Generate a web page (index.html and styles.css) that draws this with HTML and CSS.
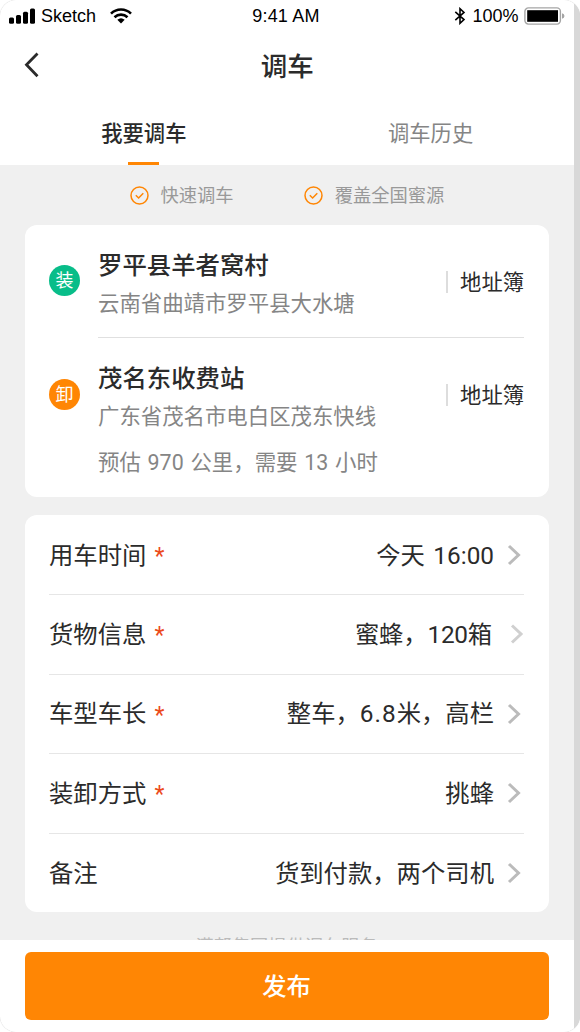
FILE: index.html
```html
<!DOCTYPE html>
<html lang="zh-CN">
<head>
<meta charset="utf-8">
<title>调车</title>
<link rel="stylesheet" href="styles.css">
</head>
<body>
<div class="frame">
<main class="screen">
  <div class="status">
    <div class="status-left">
      <svg class="signal" width="27" height="16" viewBox="0 0 27 16"><rect x="0" y="9.5" width="5" height="6.2" rx="1.5"/><rect x="7" y="7" width="5" height="8.7" rx="1.5"/><rect x="14" y="3.7" width="5" height="12" rx="1.5"/><rect x="21" y="0.5" width="5" height="15.2" rx="1.5"/></svg>
      <span>Sketch</span>
      <svg class="wifi" width="22" height="16" viewBox="0 0 22 16"><g fill="none" stroke="#000" stroke-width="2.6"><path d="M1 5.6C6.5 .1 15.500 .1 21 5.600"/><path d="M4.500 9.200C8.200 5.700 13.800 5.700 17.500 9.200"/></g><path d="M7.300 11.700Q11 8.700 14.700 11.700L11 15.500z"/></svg>
    </div>
    <div class="clock">9:41 AM</div>
    <div class="status-right">
      <svg class="bluetooth" width="12" height="18" viewBox="0 0 12 18"><path d="M1.300 4.800L10 12.600L6 16.300V1.700L10 5.400L1.300 13.200" fill="none" stroke="#000" stroke-width="1.600"/></svg>
      <span>100%</span>
      <svg class="battery" width="41" height="18" viewBox="0 0 41 18"><rect x=".9" y=".9" width="35.500" height="16.200" rx="3.500" fill="#fff" stroke="#a5a5a5" stroke-width="1.400"/><rect x="3.200" y="3.200" width="30.800" height="11.600"/><path d="M38 6.200Q40.500 7 40.500 9T38 11.800z" fill="#a5a5a5"/></svg>
    </div>
  </div>
  <header class="header">
    <svg class="back" width="16" height="26" viewBox="0 0 16 26"><path d="M13.500 1.500L2.500 12.800L13.500 24.200" fill="none" stroke="#2b2b2b" stroke-width="2.800"/></svg>
    <h1 class="title">调车</h1>
  </header>
  <nav class="tabs">
    <div class="tab active">我要调车</div>
    <div class="tab">调车历史</div>
  </nav>
  <section class="content">
    <div class="features">
      <div class="feature"><svg width="19" height="19" viewBox="0 0 19 19"><g fill="none" stroke="#ff8604" stroke-width="1.500"><circle cx="9.500" cy="9.500" r="8.500"/><path d="M5.800 9.300L8.600 12L13.300 7.200"/></g></svg><span>快速调车</span></div>
      <div class="feature"><svg width="19" height="19" viewBox="0 0 19 19"><g fill="none" stroke="#ff8604" stroke-width="1.500"><circle cx="9.500" cy="9.500" r="8.500"/><path d="M5.800 9.300L8.600 12L13.300 7.200"/></g></svg><span>覆盖全国蜜源</span></div>
    </div>
    <div class="card route">
      <div class="stop">
        <span class="badge load">装</span>
        <div class="place"><h2 class="name">罗平县羊者窝村</h2><p class="address">云南省曲靖市罗平县大水塘</p></div>
        <span class="book">地址簿</span>
      </div>
      <div class="stop second">
        <span class="badge unload">卸</span>
        <div class="place"><h2 class="name">茂名东收费站</h2><p class="address">广东省茂名市电白区茂东快线</p></div>
        <span class="book">地址簿</span>
      </div>
      <p class="estimate">预估 970 公里，需要 13 小时</p>
    </div>
    <div class="card form">
      <div class="row"><span class="label">用车时间</span><span class="required">*</span><span class="value time">今天 16:00</span><svg class="arrow" width="14" height="22" viewBox="0 0 14 22"><path d="M2 2L11.500 11L2 20"/></svg></div>
      <div class="row light"><span class="label">货物信息</span><span class="required">*</span><span class="value cargo">蜜蜂，120箱</span><svg class="arrow" width="14" height="22" viewBox="0 0 14 22"><path d="M2 2.500L11 11L2 19.500"/></svg></div>
      <div class="row"><span class="label">车型车长</span><span class="required">*</span><span class="value vehicle">整车，<span class="length">6.8</span>米，高栏</span><svg class="arrow" width="14" height="22" viewBox="0 0 14 22"><path d="M2 2L11.500 11L2 20"/></svg></div>
      <div class="row"><span class="label">装卸方式</span><span class="required">*</span><span class="value">挑蜂</span><svg class="arrow" width="14" height="22" viewBox="0 0 14 22"><path d="M2 2L11.500 11L2 20"/></svg></div>
      <div class="row"><span class="label">备注</span><span class="value">货到付款，两个司机</span><svg class="arrow" width="14" height="22" viewBox="0 0 14 22"><path d="M2 2L11.500 11L2 20"/></svg></div>
    </div>
    <p class="provider">满帮集团提供调车服务</p>
  </section>
  <footer class="footer"><button class="publish">发布</button></footer>
</main>
</div>
</body>
</html>
```
FILE: styles.css
```css
* { box-sizing: border-box; }
body { margin: 0; background: #fff; font-family: Roboto, "Noto Sans CJK SC", sans-serif; color: #2b2b2b; }
h1, h2, p { margin: 0; }
svg { display: block; flex: none; }
.frame { width: 580px; height: 1032px; background: #d8d8d8; border-radius: 16px; overflow: hidden; box-shadow: 0 0 1px rgba(0,0,0,.2); }
.screen { width: 573.5px; height: 1032px; background: #fff; display: flex; flex-direction: column; }
.status { height: 32px; flex: none; display: grid; grid-template-columns: 1fr auto 1fr; align-items: center; padding: 0 9px; font: 18px/32px "Liberation Sans", Arial, sans-serif; color: #000; }
.clock { width: 69px; white-space: nowrap; letter-spacing: .2px; }
.status-left, .status-right { display: flex; align-items: center; }
.status-left span { margin: 0 14px 0 5px; }
.status-right { justify-content: flex-end; }
.bluetooth { margin-right: 6px; }
.battery { margin-left: 5px; }
.header { height: 68px; flex: none; display: grid; grid-template-columns: 60px 1fr 60px; align-items: center; }
.back { margin-left: 24px; margin-bottom: 2px; }
.title { font-size: 26.500px; line-height: 40px; font-weight: 500; text-align: center; padding: 1px 0 0 1px; }
.tabs { height: 65px; flex: none; display: grid; grid-template-columns: 1fr 1fr; }
.tab { display: flex; flex-direction: column; align-items: center; justify-content: space-between; padding: 17px 0 0 1px; font-size: 21.300px; line-height: 34px; color: #858585; }
.active { color: #2b2b2b; font-weight: 500; }
.active::after { content: ""; width: 31px; height: 3px; background: #ff8604; }
.content { height: 775px; flex: none; overflow: hidden; background: #f0f0f0; padding: 0 25px 0 24.500px; }
.features { height: 60px; display: flex; align-items: center; gap: 70px; padding-left: 105px; font-size: 18.300px; line-height: 30px; color: #999; }
.feature { display: flex; align-items: center; gap: 12px; }
.feature span { padding-top: 2px; }
.feature svg { margin-top: 1px; }
.card { background: #fff; border-radius: 12px; }
.route { height: 272px; margin-bottom: 18.400px; padding: 0 24.500px; }
.stop { height: 112px; display: grid; grid-template-columns: 49px 1fr auto; align-items: center; position: relative; }
.stop.second { height: 113px; border-top: 1px solid #e0e0e0; margin-left: 49px; grid-template-columns: 1fr auto; }
.badge { width: 31px; height: 31px; border-radius: 50%; color: #fff; font-size: 18px; line-height: 31px; text-align: center; }
.load { background: #08bd89; margin-bottom: 2px; }
.unload { background: #ff8604; position: absolute; left: -49px; top: 41px; }
.name { font-size: 24.400px; line-height: 38px; font-weight: 500; margin-top: 8px; }
.address, .estimate { font-size: 21.400px; line-height: 38px; color: #858585; }
.book { border-left: 2px solid #ddd; padding-left: 12px; font-size: 21.300px; line-height: 21px; padding-top: 1px; position: relative; top: 1px; }
.estimate { padding: 0 0 0 49px; margin-top: -6px; word-spacing: 1.500px; }
.form { height: 397px; padding: 0 24.500px; display: grid; grid-template-rows: 78.600px repeat(4, 1fr); }
.row { display: flex; align-items: center; font-size: 24.350px; line-height: 36px; border-top: 1px solid #e6e6e6; }
.row:first-child { border-top-color: transparent; }
.label, .value { padding-top: 1px; }
.required { margin-left: 8px; color: #ec4a1b; font: 400 23px/24px Roboto, sans-serif; padding-top: 4px; }
.value { margin-left: auto; }
.time { word-spacing: 2.500px; }
.cargo { letter-spacing: -.2px; }
.length { letter-spacing: 1px; }
.arrow { fill: none; stroke: #bbb; stroke-width: 3; margin: 0 3px 0 13px; }
.light .arrow { stroke: #d0d0d0; margin: 0 0 0 18px; }
.provider { font-size: 18.200px; line-height: 30px; text-align: center; color: #bbb; margin-top: 20px; }
.footer { flex: 1; padding: 12px 25px 12px 24.500px; }
.publish { display: block; width: 100%; height: 68px; padding: 2px 0 0; border: 0; border-radius: 6px; background: #ff8604; color: #fff; font: 500 24.300px/66px Roboto, "Noto Sans CJK SC", sans-serif; }
```
